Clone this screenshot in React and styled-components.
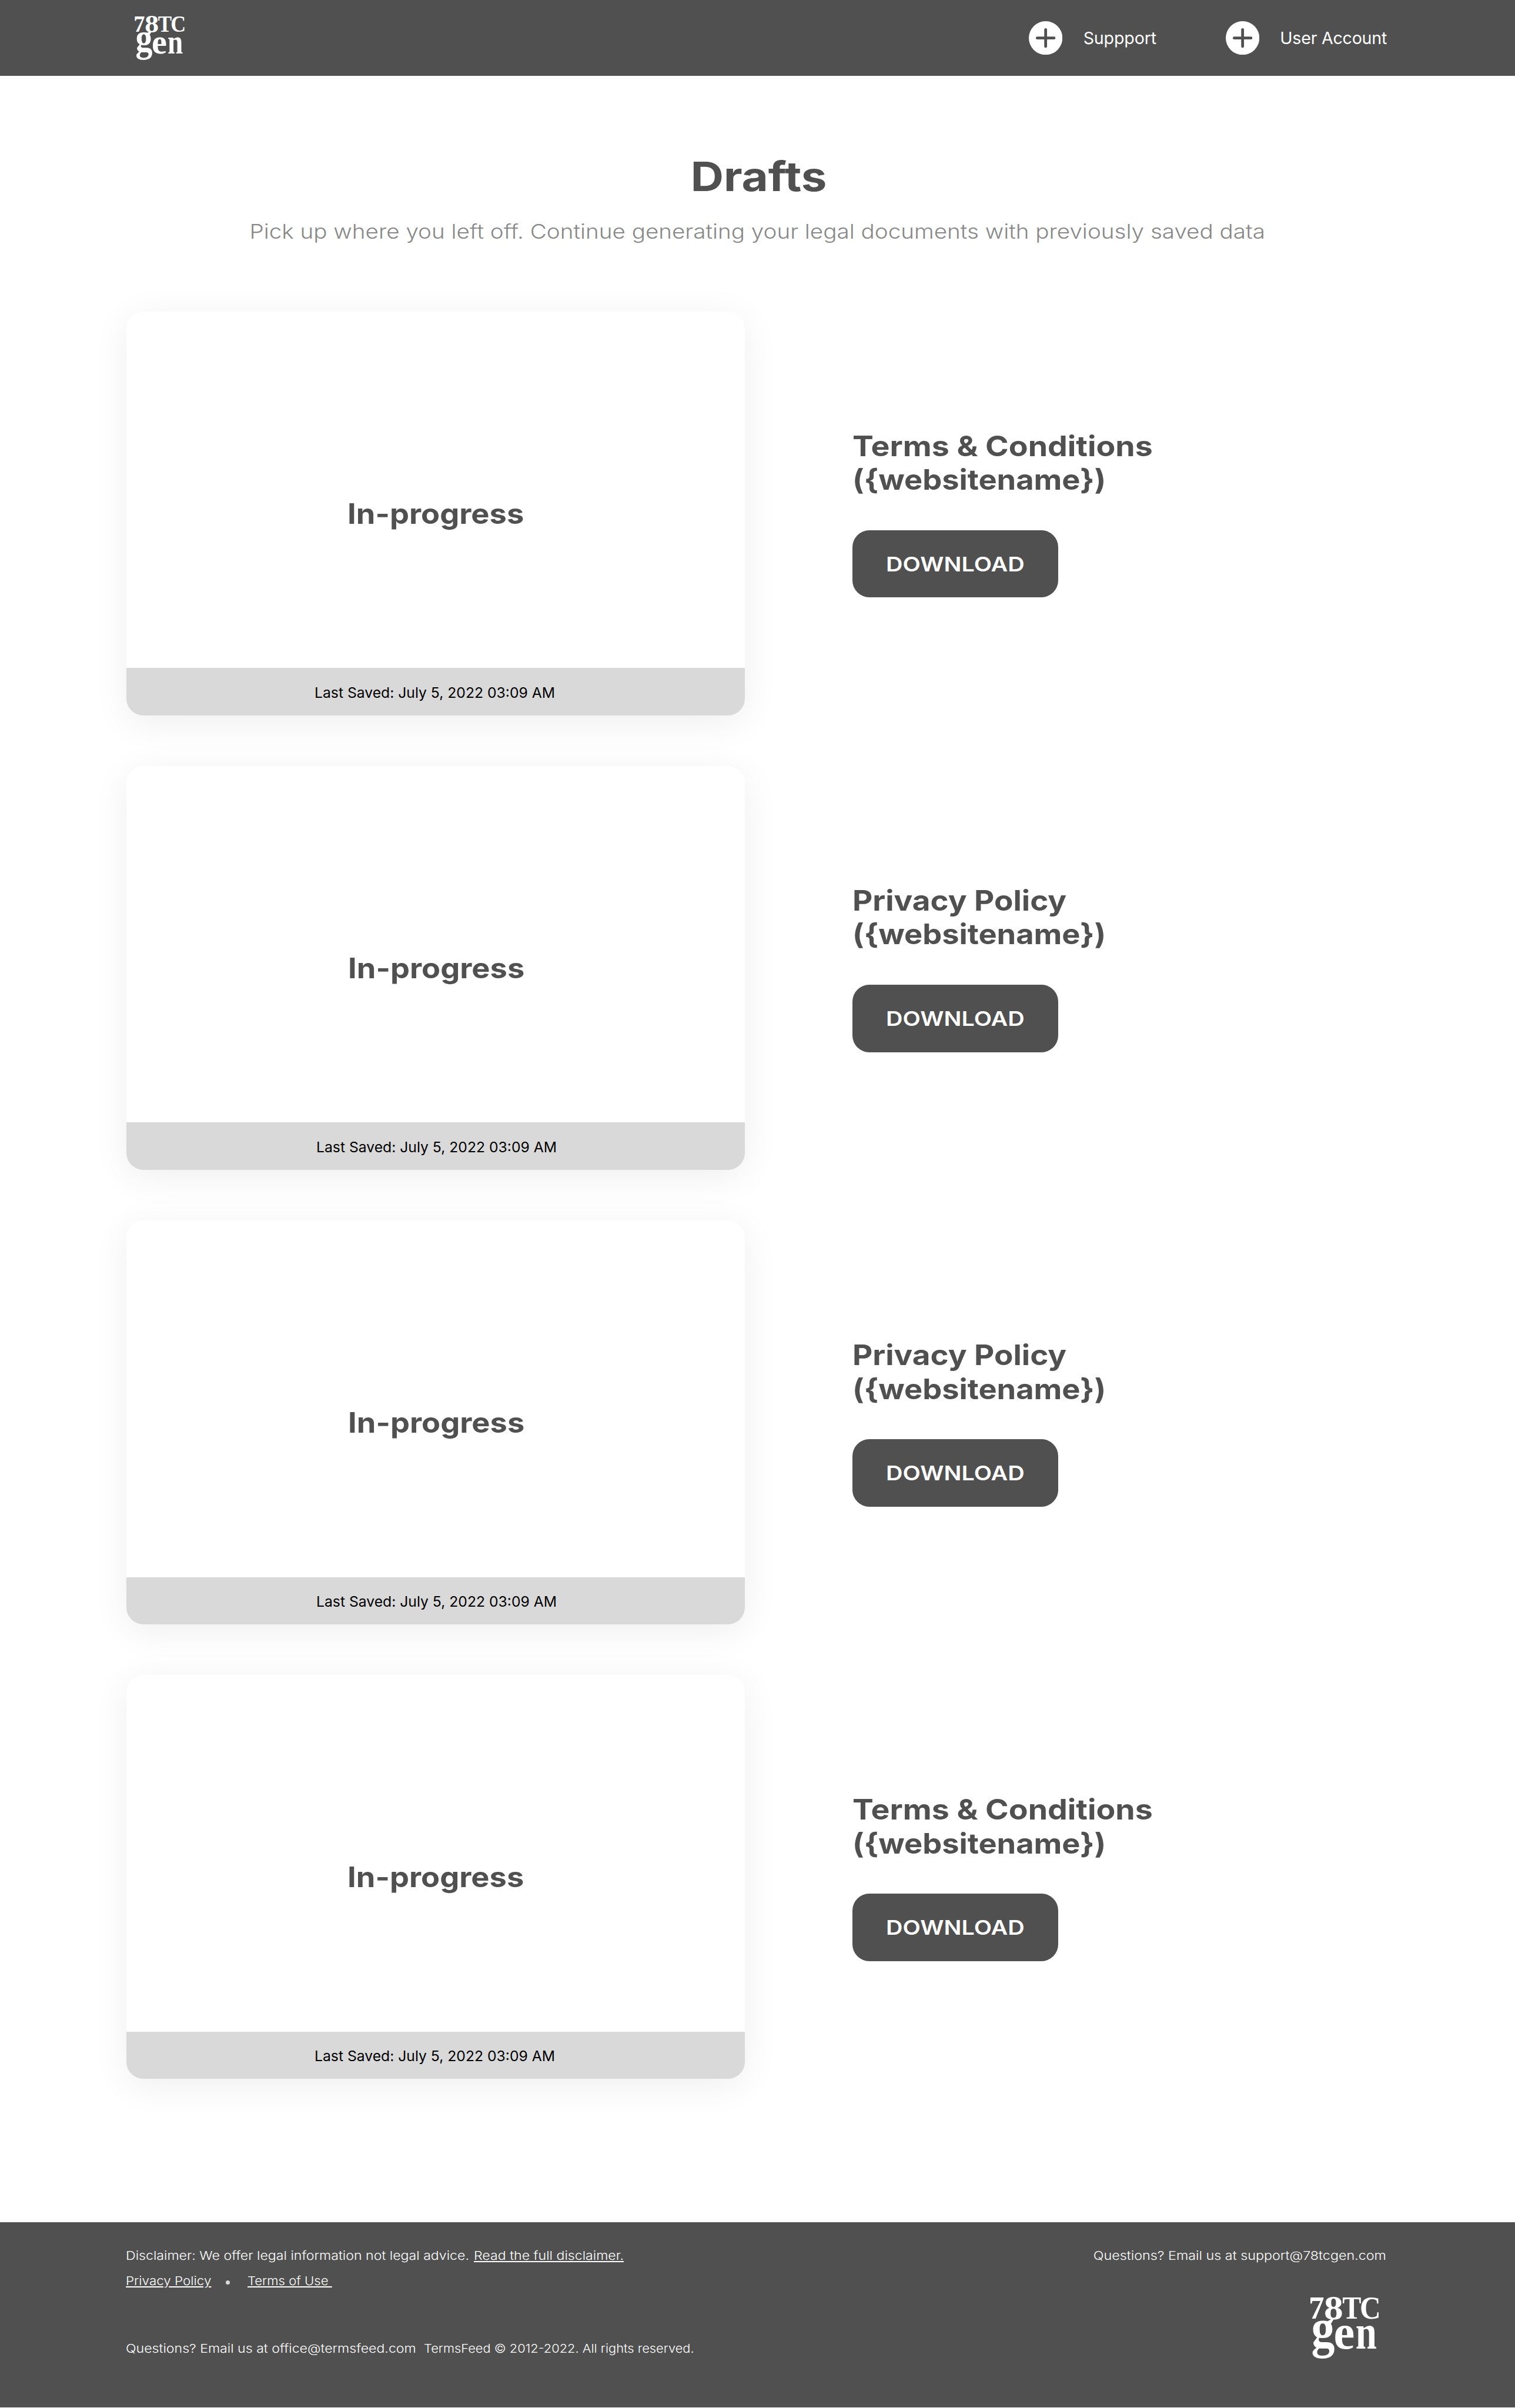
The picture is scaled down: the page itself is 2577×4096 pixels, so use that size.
import React from 'react';
import styled, { createGlobalStyle } from 'styled-components';

const SCALE = 2577 / 4320;
const u = (n) => `${(n * SCALE).toFixed(3)}px`;

const ink = '#505050';
const sans = `Inter, 'Open Sans', sans-serif`;

const GlobalStyle = createGlobalStyle`
  * { box-sizing: border-box; }
  body { margin: 0; background: #fff; font-family: ${sans}; }
  h1, h2, p { margin: 0; }
`;

const Page = styled.div`
  width: 100%;
  height: 4096px;
  overflow: hidden;
  background: #fff;
  color: ${ink};
`;

/* Widens the letterforms without changing their height. */
const Wide = styled.span`
  display: inline-block;
  transform: scaleX(${(p) => p.$by});
  transform-origin: ${(p) => p.$from || 'center'} center;
  white-space: pre;
`;

const Header = styled.header`
  display: flex;
  height: ${u(216)};
  padding-left: ${u(383)};
  background: ${ink};
`;

const HeaderLogo = styled.div`
  padding-top: ${u(44)};
`;

const LogoSvg = styled.svg`
  display: block;
  width: ${(p) => u(p.$width)};
  height: ${(p) => u(p.$width * 0.88)};
  overflow: visible;
  fill: #fff;
  font: 700 100px 'Liberation Serif', serif;
`;

const Nav = styled.nav`
  display: flex;
  align-items: center;
  width: ${u(1386)};
  margin-left: auto;
`;

const NavItem = styled.a`
  display: flex;
  align-items: center;
  gap: ${u(59)};
  width: ${u(561)};
  color: #fff;
  font-size: ${u(48)};
  letter-spacing: ${(p) => p.$spacing}px;
  white-space: nowrap;
`;

const PlusSvg = styled.svg`
  display: block;
  width: ${u(96)};
  height: ${u(96)};
`;

const Main = styled.main`
  display: flex;
  flex-direction: column;
  height: ${u(6120)};
  padding: ${u(215)} ${u(360)} 0;
`;

const Intro = styled.section`
  height: ${u(457)};
  text-align: center;
`;

const Title = styled.h1`
  padding-left: ${u(6)};
  font-size: ${u(115.6)};
  font-weight: 700;
  line-height: ${u(146)};
`;

const Subtitle = styled.p`
  margin-top: ${u(46)};
  color: #888;
  font-size: ${u(57.8)};
  font-weight: 350;
  line-height: ${u(74)};
`;

const DraftList = styled.section`
  display: flex;
  flex-direction: column;
  gap: ${u(144)};
`;

const DraftRow = styled.article`
  display: flex;
  align-items: center;
  gap: ${u(306)};
  height: ${u(1152)};
`;

const Card = styled.div`
  display: flex;
  flex-direction: column;
  width: ${u(1764)};
  height: 100%;
  border-radius: ${u(48)};
  overflow: hidden;
  background: #fff;
  box-shadow: 0 ${u(20)} ${u(104)} rgba(0, 0, 0, 0.065);
`;

const CardBody = styled.div`
  display: flex;
  flex: 1;
  align-items: center;
  justify-content: center;
  padding: ${u(136)} 0 0 ${(p) => u(p.$shift * 1.2)};
  font-size: ${u(80.9)};
  font-weight: 700;
`;

const CardFooter = styled.div`
  display: flex;
  align-items: center;
  justify-content: center;
  height: ${u(135)};
  padding: ${u(5)} ${u(6)} 0 ${(p) => u(p.$shift * 2)};
  background: #d9d9d9;
  color: #000;
  font-size: ${u(40.4)};
  font-weight: 370;
`;

const Details = styled.div`
  display: flex;
  flex-direction: column;
  align-items: flex-start;
  gap: ${u(96)};
`;

const DocTitle = styled.h2`
  display: flex;
  flex-direction: column;
  align-items: flex-start;
  font-size: ${u(80.9)};
  font-weight: 700;
  line-height: ${u(96)};
`;

const Button = styled.button`
  width: ${u(588)};
  height: ${u(192)};
  padding: 0;
  border: 0;
  border-radius: ${u(48)};
  background: ${ink};
  color: #fff;
  font: 560 ${u(57.8)} ${sans};
`;

const Footer = styled.footer`
  display: flex;
  justify-content: space-between;
  height: ${u(528)};
  padding: ${u(74)} ${u(368)} 0 ${u(359)};
  background: ${ink};
  color: #fff;
  font-size: ${u(34.7)};
  font-weight: 360;
  line-height: ${u(44)};
`;

const FooterLine = styled.div`
  display: flex;
  align-items: center;
  height: ${u(44)};
  margin-top: ${(p) => u(p.$top || 0)};
`;

const Segment = styled.span`
  flex: none;
  width: ${(p) => u(p.$width)};
`;

const FooterLink = styled.a`
  color: #fff;
`;

const Dot = styled.span`
  width: ${u(12)};
  height: ${u(12)};
  margin: ${u(8)} ${u(51)} 0 ${u(39)};
  border-radius: 50%;
  background: #d9d9d9;
`;

const Contact = styled.div`
  display: flex;
  flex-direction: column;
  align-items: flex-end;
  gap: ${u(94)};
`;

const FooterLogo = styled.div`
  padding-right: ${u(18)};
`;

const LETTERS = [
  ['7', -1.5, 64, 0.89, 0.93],
  ['8', 42, 66, 1.1, 0.96],
  ['T', 94.5, 64, 0.81, 0.92],
  ['C', 144, 64, 0.83, 0.92],
  ['g', 6, 144, 1.34, 1.56],
  ['e', 69.5, 150, 1.35, 1.38],
  ['n', 132, 150, 1.09, 1.37],
];

const Logo = ({ width }) => (
  <LogoSvg viewBox="0 0 200 176" $width={width}>
    {LETTERS.map(([letter, x, y, sx, sy]) => (
      <text key={letter} transform={`translate(${x} ${y}) scale(${sx} ${sy})`}>
        {letter}
      </text>
    ))}
  </LogoSvg>
);

const PlusIcon = () => (
  <PlusSvg viewBox="0 0 96 96">
    <circle cx="48" cy="48" r="48" fill="#fff" />
    <path d="M48 24v48M24 48h48" stroke={ink} strokeWidth="8" strokeLinecap="round" />
  </PlusSvg>
);

const DRAFTS = [
  { id: 1, name: 'Terms & Conditions', stretch: 1.111, shift: 0 },
  { id: 2, name: 'Privacy Policy', stretch: 1.097, shift: 5 },
  { id: 3, name: 'Privacy Policy', stretch: 1.097, shift: 5 },
  { id: 4, name: 'Terms & Conditions', stretch: 1.111, shift: 0 },
];

const Draft = ({ name, stretch, shift }) => (
  <DraftRow>
    <Card>
      <CardBody $shift={shift}>
        <Wide $by={1.086}>In-progress</Wide>
      </CardBody>
      <CardFooter $shift={shift}>
        <Wide $by={1.025}>Last Saved: July 5, 2022 03:09 AM</Wide>
      </CardFooter>
    </Card>
    <Details>
      <DocTitle>
        <Wide $by={stretch} $from="left">{name}</Wide>
        <Wide $by={1.085} $from="left">{'({websitename})'}</Wide>
      </DocTitle>
      <Button>
        <Wide $by={1.145}>DOWNLOAD</Wide>
      </Button>
    </Details>
  </DraftRow>
);

export default function App() {
  return (
    <Page>
      <GlobalStyle />
      <Header>
        <HeaderLogo>
          <Logo width={145} />
        </HeaderLogo>
        <Nav>
          <NavItem $spacing={-0.17}>
            <PlusIcon />
            Suppport
          </NavItem>
          <NavItem $spacing={-0.25}>
            <PlusIcon />
            User Account
          </NavItem>
        </Nav>
      </Header>
      <Main>
        <Intro>
          <Title>
            <Wide $by={1.13}>Drafts</Wide>
          </Title>
          <Subtitle>
            <Wide $by={1.12}>
              Pick up where you left off. Continue generating your legal documents with previously saved data
            </Wide>
          </Subtitle>
        </Intro>
        <DraftList>
          {DRAFTS.map((d) => (
            <Draft key={d.id} {...d} />
          ))}
        </DraftList>
      </Main>
      <Footer>
        <div>
          <FooterLine>
            <Segment $width={992}>
              <Wide $by={1.118} $from="left">Disclaimer: We offer legal information not legal advice.</Wide>
            </Segment>
            <FooterLink>
              <Wide $by={1.118} $from="left" as="u">Read the full disclaimer.</Wide>
            </FooterLink>
          </FooterLine>
          <FooterLine $top={28.5}>
            <Segment $width={245}>
              <FooterLink>
                <Wide $by={1.084} $from="left" as="u">Privacy Policy</Wide>
              </FooterLink>
            </Segment>
            <Dot />
            <FooterLink>
              <Wide $by={1.068} $from="left" as="u">{'Terms of Use '}</Wide>
            </FooterLink>
          </FooterLine>
          <FooterLine $top={149}>
            <Segment $width={849}>
              <Wide $by={1.118} $from="left">Questions? Email us at office@termsfeed.com</Wide>
            </Segment>
            <Segment $width={780}>
              <Wide $by={1.055} $from="left">TermsFeed © 2012-2022. All rights reserved.</Wide>
            </Segment>
          </FooterLine>
        </div>
        <Contact>
          <Wide $by={1.127} $from="right">Questions? Email us at support@78tcgen.com</Wide>
          <FooterLogo>
            <Logo width={200} />
          </FooterLogo>
        </Contact>
      </Footer>
    </Page>
  );
}
